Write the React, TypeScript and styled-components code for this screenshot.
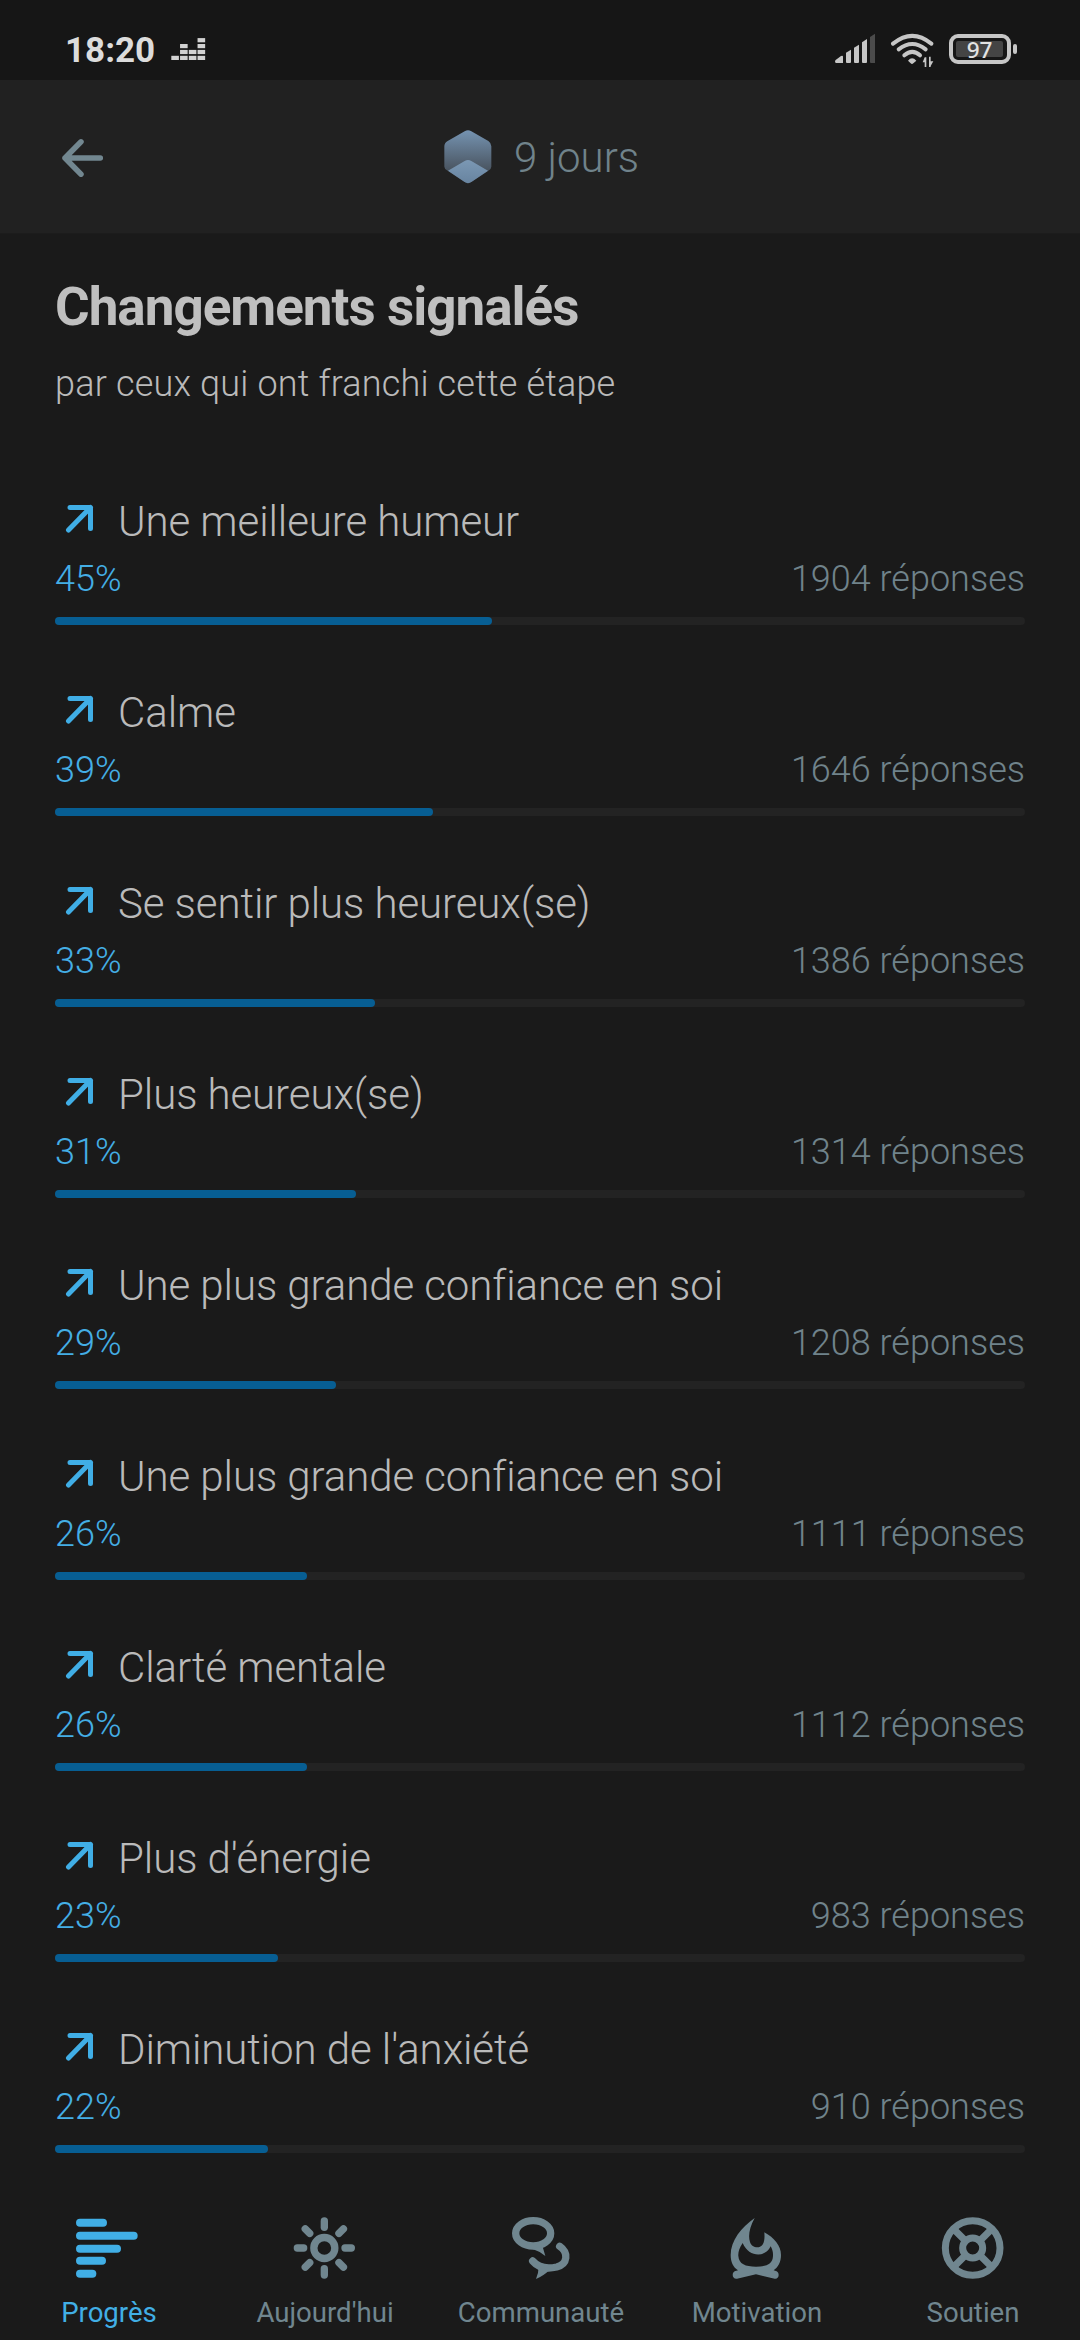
import React from "react";
import styled, { createGlobalStyle } from "styled-components";

const GlobalStyle = createGlobalStyle`
  * { box-sizing: border-box; }
  body { margin: 0; background: #1a1a1a; font-family: Roboto, "Noto Sans", sans-serif; }
`;

const Screen = styled.div`
  width: 1080px;
  height: 2340px;
  display: flex;
  flex-direction: column;
  overflow: hidden;
  background: #1a1a1a;
`;

const StatusBar = styled.div`
  height: 80px;
  flex: none;
  display: flex;
  align-items: flex-start;
  justify-content: space-between;
  padding: 30px 63px 0 65px;
  background: #161616;
`;

const StatusGroup = styled.div`
  display: flex;
  align-items: flex-start;
`;

const Clock = styled.div`
  width: 106px;
  padding-top: 1px;
  font-size: 35px;
  font-weight: 700;
  line-height: 40px;
  color: #dcdcdc;
  white-space: nowrap;
`;

const Equalizer = styled.svg`
  width: 35px;
  height: 24px;
  margin-top: 7px;
`;

const Radios = styled.svg`
  width: 104px;
  height: 40px;
  margin-right: 10px;
`;

const Battery = styled.div`
  width: 62px;
  height: 30px;
  margin-top: 4px;
  padding: 3px;
  border: 4px solid #c6c6c6;
  border-radius: 9px;
`;

const BatteryLevel = styled.div`
  width: 47px;
  height: 16px;
  border-radius: 2px;
  background: #444;
  color: #e2e2e2;
  font: 500 22.5px/17px "Noto Sans", sans-serif;
  text-align: center;
`;

const BatteryTip = styled.div`
  width: 4px;
  height: 10px;
  margin: 14px 0 0 2px;
  border-radius: 2px;
  background: #c6c6c6;
`;

const Header = styled.header`
  height: 154px;
  flex: none;
  display: grid;
  grid-template-columns: 100px 1fr 100px;
  align-items: center;
  background: #212121;
  border-bottom: 1px solid #1c1c1c;
`;

const BackIcon = styled.svg`
  width: 44px;
  height: 42px;
  margin-left: 60px;
  margin-top: 3px;
`;

const Milestone = styled.div`
  display: flex;
  align-items: center;
  justify-content: center;
  gap: 22px;
  padding: 3px 0 0 3px;
  font-size: 42px;
  font-weight: 300;
  line-height: 50px;
  color: #70838b;
`;

const Badge = styled.svg`
  width: 48px;
  height: 54px;
  margin-top: -2px;
`;

const Content = styled.main`
  flex: 1;
  min-height: 0;
  padding: 42px 55px 0;
  overflow: hidden;
`;

const Title = styled.h1`
  margin: 0 0 24px;
  font-size: 53px;
  font-weight: 700;
  line-height: 62px;
  letter-spacing: -1px;
  color: #bfbfbf;
`;

const Subtitle = styled.p`
  margin: 0 0 91px;
  font-size: 36px;
  font-weight: 300;
  line-height: 44px;
  letter-spacing: 0.18px;
  color: #bababa;
`;

const Change = styled.section`
  height: 191px;
`;

const ChangeHead = styled.div`
  display: flex;
  align-items: flex-start;
  gap: 23px;
  padding-left: 10px;
  margin-bottom: 10px;
`;

const TrendIcon = styled.svg`
  width: 30px;
  height: 30px;
  margin-top: 7px;
`;

const ChangeName = styled.div`
  font-size: 42px;
  font-weight: 300;
  line-height: 50px;
  letter-spacing: -0.08px;
  color: #bababa;
`;

const Meta = styled.div`
  display: flex;
  justify-content: space-between;
  margin-bottom: 16px;
  font-size: 36px;
  font-weight: 300;
  line-height: 44px;
  color: #70838b;
`;

const Percent = styled.span`
  color: #44aee5;
`;

const Track = styled.div`
  height: 8px;
  border-radius: 4px;
  background: #232323;
`;

const Fill = styled.div`
  height: 8px;
  border-radius: 4px;
  background: #075e93;
`;

const Nav = styled.nav`
  height: 138px;
  flex: none;
  display: grid;
  grid-template-columns: repeat(5, 1fr);
  background: #1a1a1a;
`;

const Tab = styled.div<{ $active?: boolean }>`
  display: flex;
  flex-direction: column;
  align-items: center;
  gap: 18px;
  padding-top: 15px;
  font-size: 27.6px;
  font-weight: 400;
  line-height: 32px;
  color: ${(p) => (p.$active ? "#41afe6" : "#70868f")};
`;

const TabLabel = styled.span`
  padding-left: 2px;
`;

const TabIcon = styled.svg`
  width: 62px;
  height: 62px;
  overflow: visible;
`;

const changes = [
  { name: "Une meilleure humeur", percent: 45, answers: 1904 },
  { name: "Calme", percent: 39, answers: 1646 },
  { name: "Se sentir plus heureux(se)", percent: 33, answers: 1386 },
  { name: "Plus heureux(se)", percent: 31, answers: 1314 },
  { name: "Une plus grande confiance en soi", percent: 29, answers: 1208 },
  { name: "Une plus grande confiance en soi", percent: 26, answers: 1111 },
  { name: "Clarté mentale", percent: 26, answers: 1112 },
  { name: "Plus d'énergie", percent: 23, answers: 983 },
  { name: "Diminution de l'anxiété", percent: 22, answers: 910 },
];

const bars = [
  [228, 294, 93],
  [228, 333, 185],
  [228, 372, 135],
  [228, 408, 90],
  [228, 447, 61],
];

const eqColumns = [1, 3, 2, 4];

function App() {
  return (
    <Screen>
      <GlobalStyle />
      <StatusBar>
        <StatusGroup>
          <Clock>18:20</Clock>
          <Equalizer viewBox="0 0 35 24" fill="#d2d2d2">
            {eqColumns.map((count, c) =>
              Array.from({ length: count }, (_, r) => (
                <rect key={`${c}-${r}`} x={0.3 + c * 8.75} y={18.8 - r * 5.9} width={7.6} height={4.2} />
              ))
            )}
          </Equalizer>
        </StatusGroup>
        <StatusGroup>
          <Radios viewBox="102 90 312 120">
            <g fill="#c6c6c6">
              <path d="M102 184 Q103 180 107 178 L120 168 Q126 165 126 170 V189 H105 Q102 189 102 184Z" />
              <path d="M135 158 L150 149 V186 Q150 189 147 189 H138 Q135 189 135 186Z" />
              <path d="M159 143 L174 134 V186 Q174 189 171 189 H162 Q159 189 159 186Z" />
              <path d="M183 127 L198 117 V186 Q198 189 195 189 H186 Q183 189 183 186Z" />
            </g>
            <path d="M207 111 L222 101 V189 H210 Q207 189 207 186Z" fill="#4b4b4b" />
            <g fill="none" stroke="#c6c6c6" strokeWidth="12" strokeLinecap="round">
              <path d="M276 131 Q334 84 391 131" />
              <path d="M293 148 Q334 116 374 148" />
              <path d="M310 166 Q334 145 357 166" />
            </g>
            <path d="M321 182 Q333 168 346 182 L337 190 Q333 194 329 190Z" fill="#c6c6c6" />
            <path d="M371 172 H376 V201 H371 V187 H365Z M384 170 H389 V184 H397 L389 198 V201 H384Z" fill="#c6c6c6" />
          </Radios>
          <Battery>
            <BatteryLevel>97</BatteryLevel>
          </Battery>
          <BatteryTip />
        </StatusGroup>
      </StatusBar>

      <Header>
        <BackIcon viewBox="0 0 44 42" fill="none" stroke="#728790" strokeWidth="5.5" strokeLinecap="round" strokeLinejoin="round">
          <path d="M40.3 21H5M21 4.8L5 21L21 37.2" />
        </BackIcon>
        <Milestone>
          <Badge viewBox="131 151 144 162">
            <defs>
              <linearGradient id="hexTop" x1="0" y1="0" x2="0" y2="1">
                <stop offset="0" stopColor="#7593b1" />
                <stop offset="0.75" stopColor="#4a5561" />
                <stop offset="1" stopColor="#4a5561" />
              </linearGradient>
              <linearGradient id="hexFold" x1="0" y1="0" x2="0" y2="1">
                <stop offset="0" stopColor="#7b98b4" />
                <stop offset="1" stopColor="#6884a0" />
              </linearGradient>
            </defs>
            <path d="M193 155 Q203 149 213 155 L264 184 Q273 190 273 200 V261 Q273 268 264 273 L213 307 Q203 314 193 307 L142 273 Q132 268 132 261 V200 Q132 190 142 184Z" fill="url(#hexTop)" />
            <path d="M193 244 Q203 238 213 244 L263 273 L213 307 Q203 314 193 307 L143 273Z" fill="url(#hexFold)" />
          </Badge>
          <span>9 jours</span>
        </Milestone>
      </Header>

      <Content>
        <Title>Changements signalés</Title>
        <Subtitle>par ceux qui ont franchi cette étape</Subtitle>
        {changes.map((item, i) => (
          <Change key={i}>
            <ChangeHead>
              <TrendIcon viewBox="0 0 30 30" fill="none" stroke="#40aee6" strokeWidth="5" strokeLinecap="round" strokeLinejoin="round">
                <path d="M5 3.5H25.5V24.5M25.5 3.5L3.5 26" />
              </TrendIcon>
              <ChangeName>{item.name}</ChangeName>
            </ChangeHead>
            <Meta>
              <Percent>{item.percent}%</Percent>
              <span>{item.answers} réponses</span>
            </Meta>
            <Track>
              <Fill style={{ width: `${item.percent}%` }} />
            </Track>
          </Change>
        ))}
      </Content>

      <Nav>
        <Tab $active>
          <TabIcon viewBox="231 289 186 186" fill="currentColor">
            {bars.map(([x, y, w]) => (
              <rect key={y} x={x} y={y} width={w} height={24} rx={12} />
            ))}
          </TabIcon>
          <TabLabel>Progrès</TabLabel>
        </Tab>
        <Tab>
          <TabIcon viewBox="879 289 186 186" fill="none" stroke="currentColor" strokeWidth="22" strokeLinecap="round">
            <circle cx="973" cy="382" r="31.5" />
            {[0, 45, 90, 135, 180, 225, 270, 315].map((a) => (
              <path key={a} d="M973 301V320" transform={`rotate(${a} 973 382)`} />
            ))}
          </TabIcon>
          <TabLabel>Aujourd'hui</TabLabel>
        </Tab>
        <Tab>
          <TabIcon viewBox="267 109 186 186" fill="none" stroke="currentColor" strokeWidth="22" strokeLinecap="round">
            <ellipse cx="339.5" cy="158" rx="52.5" ry="38" />
            <path d="M336 204 Q356 210 376 226 L368 198Z" fill="currentColor" stroke="none" />
            <path d="M419 197 C446 216 444 250 410 259 C384 265 356 262 338 241" />
            <path d="M356 258 Q356 275 348 295 Q372 284 386 270Z" fill="currentColor" stroke="none" />
          </TabIcon>
          <TabLabel>Communauté</TabLabel>
        </Tab>
        <Tab>
          <TabIcon viewBox="915 109 186 186" fill="currentColor">
            <path
              fillRule="evenodd"
              d="M1004 112 C988 142 984 166 990 184 C995 202 1020 206 1029 190 C1034 180 1034 168 1033 155 C1063 172 1083 195 1083 223 C1083 244 1074 260 1061 269 L1070 272 C1080 278 1077 296 1064 294 L1008 281 L951 294 C937 296 934 278 944 272 L954 269 C940 260 932 244 932 223 C932 180 964 140 1004 112Z M968 187 C958 202 954 215 955 226 C957 250 976 258 1008 258 C1040 258 1058 250 1059 226 C1060 214 1056 204 1052 197 C1036 232 986 230 968 187Z"
            />
          </TabIcon>
          <TabLabel>Motivation</TabLabel>
        </Tab>
        <Tab>
          <TabIcon viewBox="423 109 186 186" fill="none" stroke="currentColor" strokeWidth="21">
            <circle cx="518" cy="202" r="82" />
            <circle cx="518" cy="202" r="30" />
            <path d="M460 144L497 181M539 223L576 260M576 144L539 181M497 223L460 260" />
          </TabIcon>
          <TabLabel>Soutien</TabLabel>
        </Tab>
      </Nav>
    </Screen>
  );
}

export default App;
